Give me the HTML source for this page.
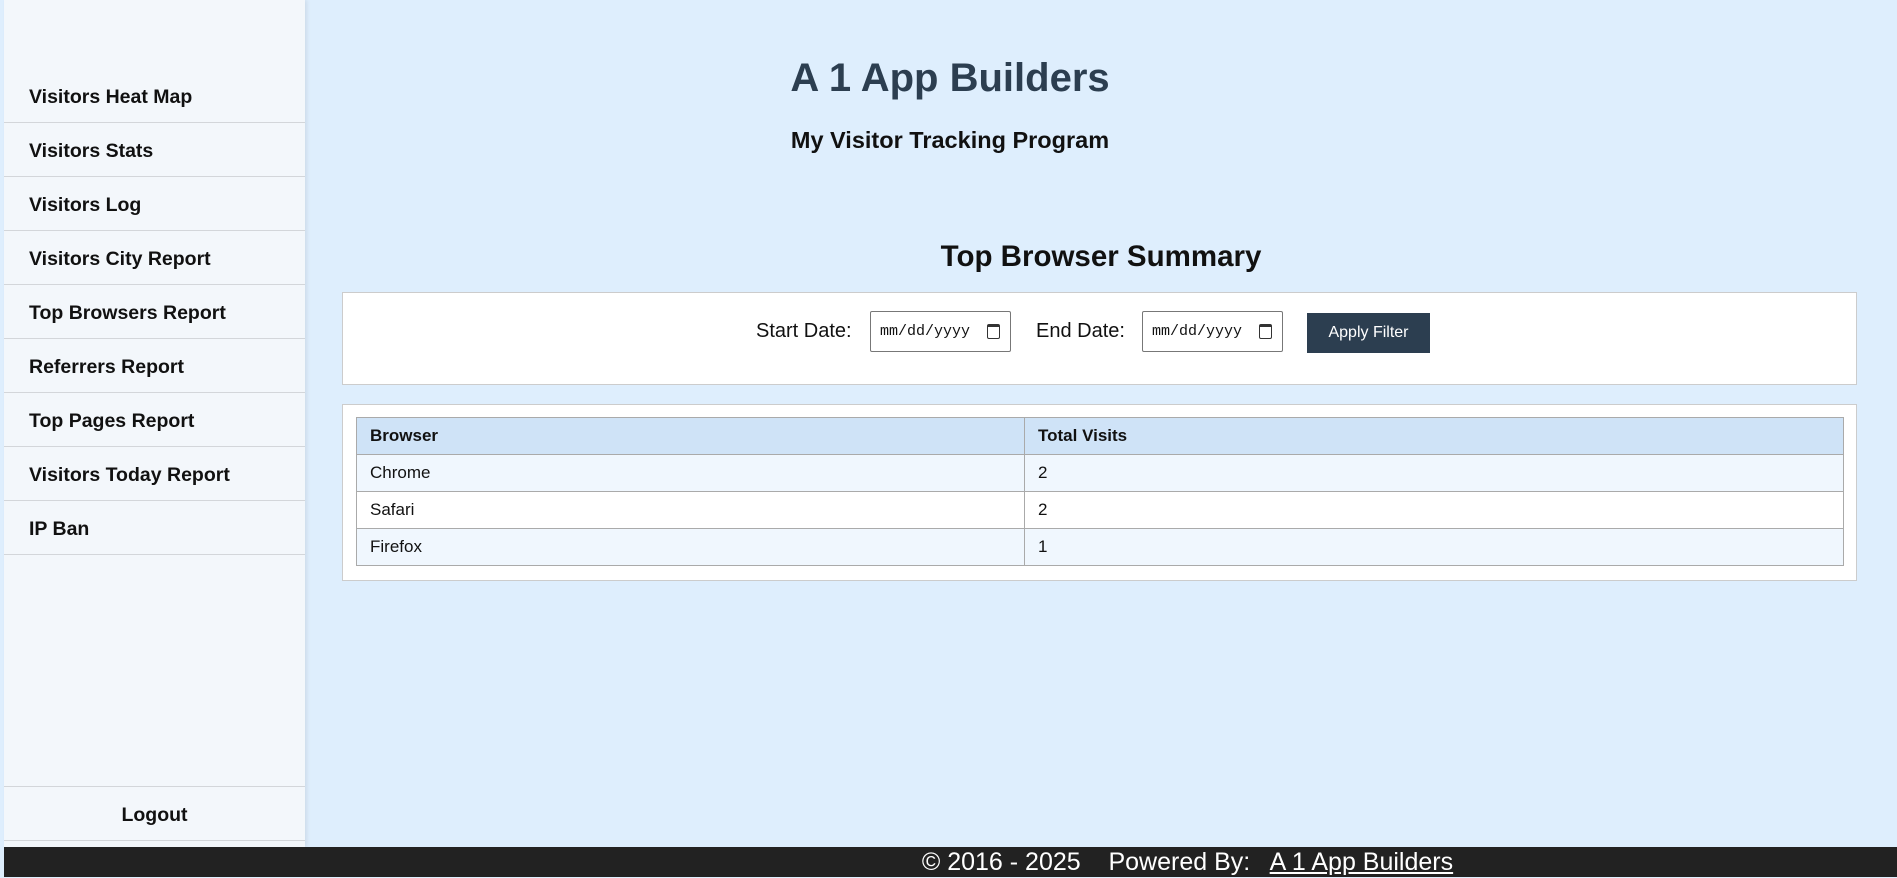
<!DOCTYPE html>
<html><head><meta charset="utf-8"><style>
*{box-sizing:border-box;margin:0;padding:0}
body{width:1897px;height:877px;overflow:hidden;background:#deeefd;font-family:"Liberation Sans",Arial,sans-serif;position:relative}
.side{position:absolute;left:4px;top:0;width:301px;height:847px;background:#f3f7fb;box-shadow:2px 0 4px rgba(0,0,0,.08)}
.side .it{position:absolute;left:0;width:301px;height:54px;border-bottom:1.5px solid #d3d6da;font-weight:bold;font-size:19.5px;color:#111;padding-left:25px;line-height:56px}
.main{position:absolute;left:305px;right:0;top:0}
h1{position:absolute;left:0;width:1290px;text-align:center;top:56px;font-size:40px;color:#2c3e50}
h3{position:absolute;left:0;width:1290px;text-align:center;top:127px;font-size:23.5px;color:#111}
h2{position:absolute;left:0;width:1592px;text-align:center;top:240px;font-size:29.5px;color:#111}
.box{position:absolute;left:37px;width:1515px;background:#fff;border:1.5px solid #ccc}
.lbl{position:absolute;top:320px;font-size:20px;color:#111}
.inp{position:absolute;top:311px;width:141px;height:41px;border:1.5px solid #777;border-radius:2px;background:#fff;font-family:"Liberation Mono",monospace;font-size:15px;padding-left:9px;line-height:40px;color:#111}
.inp i{position:absolute;right:10px;top:12px;width:13px;height:15px;border:1.5px solid #333;border-radius:2px;border-top-width:3px}
.btn{position:absolute;left:1002px;top:313px;width:123px;height:40px;background:#2c3e50;color:#fff;font-size:16px;text-align:center;line-height:40px}
table{position:absolute;left:51px;top:417px;width:1488px;border-collapse:collapse;font-size:17px}
td,th{border:1.5px solid #aaa;height:37px;padding-left:13px;text-align:left;color:#111}
th{background:#cfe3f7;font-weight:bold}
tr.o td{background:#f0f7fe}
.foot{position:absolute;left:4px;right:0;top:847px;height:30px;background:#222;color:#fff;font-size:25px;text-align:center;line-height:31px;padding-left:474px}
.foot u{color:#fff}
</style></head><body>
<div class="side">
<div class="it" style="top:69px">Visitors Heat Map</div>
<div class="it" style="top:123px">Visitors Stats</div>
<div class="it" style="top:177px">Visitors Log</div>
<div class="it" style="top:231px">Visitors City Report</div>
<div class="it" style="top:285px">Top Browsers Report</div>
<div class="it" style="top:339px">Referrers Report</div>
<div class="it" style="top:393px">Top Pages Report</div>
<div class="it" style="top:447px">Visitors Today Report</div>
<div class="it" style="top:501px">IP Ban</div>
<div class="it" style="top:786px;border-top:1.5px solid #d3d6da;text-align:center;padding-left:0;height:55px">Logout</div>
</div>
<div class="main">
<h1>A 1 App Builders</h1>
<h3>My Visitor Tracking Program</h3>
<h2>Top Browser Summary</h2>
<div class="box" style="top:292px;height:93px"></div>
<div class="lbl" style="left:451px">Start Date:</div>
<div class="inp" style="left:565px">mm/dd/yyyy<i></i></div>
<div class="lbl" style="left:731px">End Date:</div>
<div class="inp" style="left:837px">mm/dd/yyyy<i></i></div>
<div class="btn">Apply Filter</div>
<div class="box" style="top:404px;height:177px"></div>
<table>
<tr><th style="width:668px">Browser</th><th>Total Visits</th></tr>
<tr class="o"><td>Chrome</td><td>2</td></tr>
<tr><td>Safari</td><td>2</td></tr>
<tr class="o"><td>Firefox</td><td>1</td></tr>
</table>
</div>
<div class="foot">© 2016 - 2025 &nbsp;&nbsp; Powered By: &nbsp; <u>A 1 App Builders</u></div>
</body></html>
